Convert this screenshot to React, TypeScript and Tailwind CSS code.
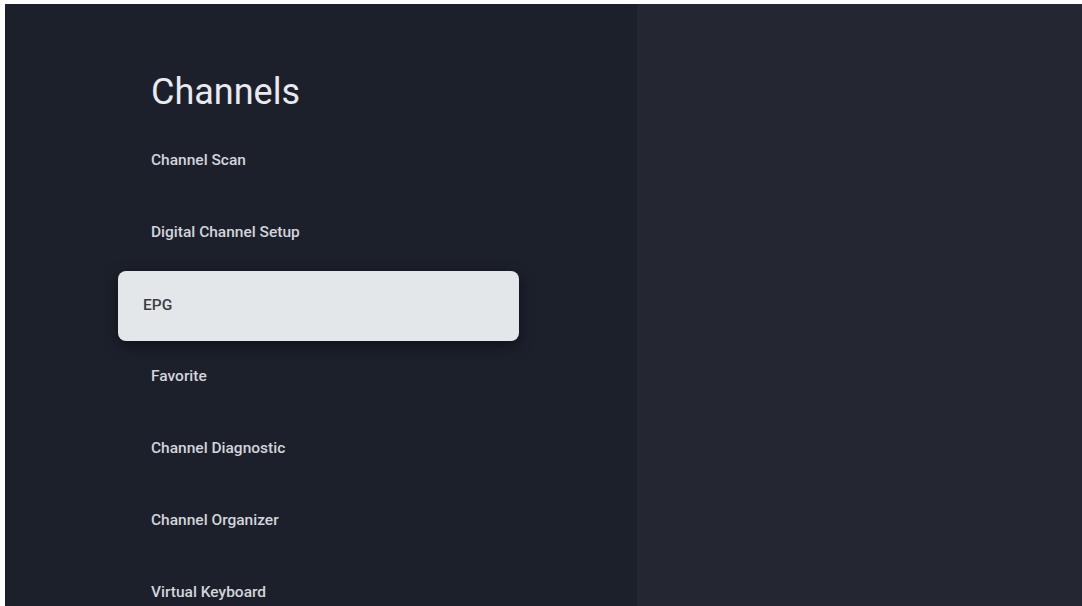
import * as React from "react";

const items = [
  "Channel Scan",
  "Digital Channel Setup",
  "EPG",
  "Favorite",
  "Channel Diagnostic",
  "Channel Organizer",
  "Virtual Keyboard",
];

export default function App() {
  const focused = "EPG";

  return (
    <div
      className="w-[1082px] h-[606px] bg-white pt-[4px] pl-[5px] overflow-hidden"
      style={{ fontFamily: "Roboto, 'Noto Sans', sans-serif" }}
    >
      <div className="flex h-full">
        {/* Menu panel */}
        <div className="w-[632px] h-full bg-[#1c202b] overflow-hidden">
          <h1 className="pl-[146px] pt-[66px] text-[36px] leading-[44px] text-[#e8eaee] font-normal">
            Channels
          </h1>
          <ul className="mt-[11px] ml-[113px] w-[401px]">
            {items.map((item) =>
              item === focused ? (
                <li key={item} className="h-[72px] flex items-center">
                  <div className="w-full h-[70px] mt-[1px] flex items-center pl-[25px] rounded-[8px] bg-[#e4e7ea] text-[#3a3d44] text-[15.5px] font-medium shadow-[0_4px_14px_rgba(0,0,0,0.5)]">
                    {item}
                  </div>
                </li>
              ) : (
                <li
                  key={item}
                  className="h-[72px] flex items-center pl-[33px] text-[15.5px] font-medium text-[#d2d5da]"
                >
                  {item}
                </li>
              )
            )}
          </ul>
        </div>

        {/* Empty detail panel */}
        <div className="flex-1 h-full bg-[#242632]" />
      </div>
    </div>
  );
}
